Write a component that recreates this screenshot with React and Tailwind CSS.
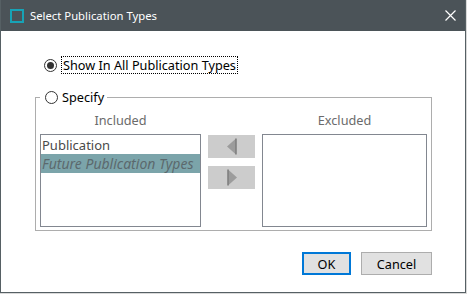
// Select Publication Types dialog
function Radio({ checked }) {
  return (
    <span className="w-[13px] h-[13px] rounded-full border border-[#333333] bg-white flex items-center justify-center shrink-0">
      {checked && <span className="w-[7px] h-[7px] rounded-full bg-[#333333]" />}
    </span>
  );
}

function ArrowButton({ dir }) {
  return (
    <button className="w-[47px] h-[23px] bg-[#cccccc] flex items-center justify-center">
      <svg width="12" height="17" viewBox="0 0 12 17">
        {dir === 'left' ? (
          <>
            <polygon points="10,0.5 1,8.5 10,16.5" fill="#9c9c9c" />
            <line x1="10" y1="0.5" x2="10" y2="16.5" stroke="#7d7d7d" strokeWidth="1.5" />
          </>
        ) : (
          <>
            <polygon points="2,0.5 11,8.5 2,16.5" fill="#9c9c9c" />
            <line x1="2" y1="0.5" x2="2" y2="16.5" stroke="#7d7d7d" strokeWidth="1.5" />
          </>
        )}
      </svg>
    </button>
  );
}

export default function App() {
  return (
    <div className="w-[467px] h-[294px] bg-[#d9d9d9] font-['Noto_Sans',sans-serif] text-[12.7px] leading-[16px]">
      <div className="w-[466px] h-[293px] flex flex-col bg-white border-x border-b border-[#566064]">
        {/* Title bar */}
        <div className="h-[31px] shrink-0 flex items-center bg-[#4b5358] pl-[9px] pr-[9px] text-white">
          <span className="w-[14px] h-[14px] border-2 border-[#17a3b6]" />
          <span className="ml-[6px] text-[11.3px]">Select Publication Types</span>
          <svg className="ml-auto" width="11" height="11" viewBox="0 0 11 11">
            <path d="M0.5 0.5 L10.5 10.5 M10.5 0.5 L0.5 10.5" stroke="#ffffff" strokeWidth="1.2" />
          </svg>
        </div>

        <div className="flex flex-col pl-[34px]">
          {/* Show in all */}
          <div className="mt-[25px] h-[18px] flex items-center pl-[9px] text-black">
            <Radio checked />
            <span className="ml-[4px] h-[18px] px-[1px] flex items-center border border-dotted border-black">
              Show In All Publication Types
            </span>
          </div>

          {/* Specify group */}
          <fieldset className="mt-[15px] w-[397px] h-[142px] border border-[#adadad] px-[4px]">
            <legend className="ml-0 pl-[5px] pr-[3px] h-[16px] flex items-center text-black">
              <Radio />
              <span className="ml-[4px]">Specify</span>
            </legend>

            <div className="flex pt-[7px]">
              <div className="w-[161px] flex flex-col items-center">
                <span className="h-[16px] text-[#6b6b6b]">Included</span>
                <div className="mt-[6px] w-[161px] h-[93px] border border-[#828790] flex flex-col text-[#4a4a4a] text-[13px]">
                  <div className="h-[19px] pl-[1px] flex items-center">Publication</div>
                  <div className="h-[19px] pl-[1px] flex items-center bg-[#7ba4aa] italic text-[14px] text-[#5b696d] whitespace-nowrap">
                    Future Publication Types
                  </div>
                </div>
              </div>

              <div className="ml-[7px] pt-[23px] flex flex-col gap-[8px]">
                <ArrowButton dir="left" />
                <ArrowButton dir="right" />
              </div>

              <div className="ml-[7px] w-[165px] flex flex-col items-center">
                <span className="h-[16px] text-[#6b6b6b]">Excluded</span>
                <div className="mt-[6px] w-[165px] h-[93px] border border-[#828790]" />
              </div>
            </div>
          </fieldset>

          {/* Buttons */}
          <div className="w-[397px] mt-[21px] flex justify-end gap-[10px] text-black">
            <button className="w-[49px] h-[23px] border-2 border-[#0078d7] bg-[#e1e1e1] flex items-center justify-center">OK</button>
            <button className="w-[71px] h-[23px] border border-[#adadad] bg-[#e1e1e1] flex items-center justify-center">Cancel</button>
          </div>
        </div>
      </div>
    </div>
  );
}
